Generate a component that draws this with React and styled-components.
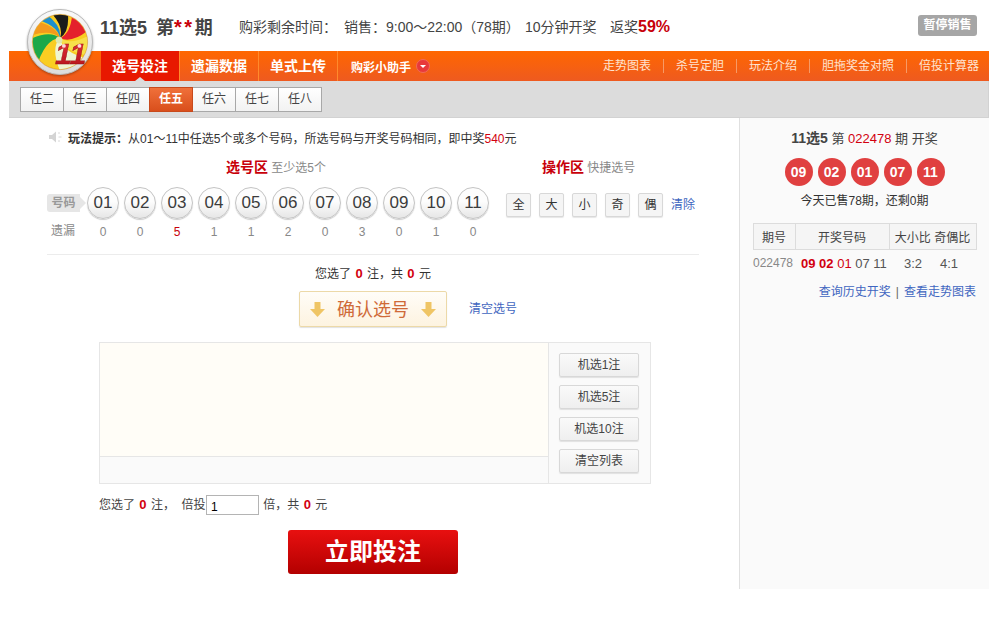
import styled, {createGlobalStyle} from 'styled-components'

const balls = ['01','02','03','04','05','06','07','08','09','10','11']
const misses = [0,0,5,1,1,2,0,3,0,1,0]
const tabs = ['任二','任三','任四','任五','任六','任七','任八']
const quick = ['全','大','小','奇','偶']
const links = ['走势图表','杀号定胆','玩法介绍','胆拖奖金对照','倍投计算器']
const randoms = ['机选1注','机选5注','机选10注','清空列表']
const drawn = ['09','02','01','07','11']

// full width punctuation
const COLON = '\uFF1A'
const COMMA = '\uFF0C'
const saleText = `销售${COLON}9:00\uFF5E22:00\uFF0878期\uFF09`
const tipText = `从01\uFF5E11中任选5个或多个号码${COMMA}所选号码与开奖号码相同${COMMA}即中奖`

const swirl = [
  ['#1b1b1b', -118, -82], ['#e4202c', -72, -22], ['#f7e04a', -12, 28],
  ['#eef6d2', 34, 86], ['#1ca84a', 128, 172], ['#f39a1c', 178, 208], ['#1c8fce', 212, 232],
]

const wedge = (from, to) => {
  const pt = (a, r) => {
    const t = a * Math.PI / 180
    return `${(34 + Math.cos(t) * r).toFixed(1)} ${(30 + Math.sin(t) * r).toFixed(1)}`
  }
  return `M34 30Q${pt(from + 48, 16)} ${pt(from, 40)}L${pt(to, 40)}Q${pt(to + 48, 16)} 34 30Z`
}

const Logo = () => (
  <LogoMark viewBox="0 0 68 68" width="66" height="66">
    <defs>
      <clipPath id="logo-clip"><circle cx="34" cy="34" r="28" /></clipPath>
      <linearGradient id="logo-ring" x1="0" y1="0" x2="0" y2="1">
        <stop offset="0" stopColor="#fafafa" />
        <stop offset="1" stopColor="#dcdcdc" />
      </linearGradient>
      <linearGradient id="logo-eleven" x1="0" y1="0" x2="0" y2="1">
        <stop offset="0" stopColor="#e8333a" />
        <stop offset="1" stopColor="#b01218" />
      </linearGradient>
    </defs>
    <circle cx="34" cy="34" r="33.500" fill="url(#logo-ring)" stroke="#b8b8b8" strokeWidth="1" />
    <circle cx="34" cy="34" r="28.500" fill="#f6a81c" stroke="#c8a050" strokeWidth=".5" />
    <g clipPath="url(#logo-clip)">
      <circle cx="34" cy="34" r="28" fill="#f9cd22" />
      {swirl.map(([color, from, to]) => <path key={color} d={wedge(from, to)} fill={color} />)}
    </g>
    <circle cx="33" cy="32" r="3.500" fill="#dfe8b0" />
    <text x="45" y="57" textAnchor="middle" fontFamily="Liberation Sans" fontWeight="700" fontStyle="italic" fontSize="31" fill="url(#logo-eleven)" stroke="#8f0d10" strokeWidth=".4">11</text>
    <circle cx="38" cy="38" r="2" fill="#ffd8d8" />
    <circle cx="54" cy="38" r="2" fill="#ffd8d8" />
  </LogoMark>
)

const Speaker = () => (
  <svg width="14" height="12" viewBox="0 0 14 12">
    <path d="M0 4h3l4-3.500v11L3 8H0z" fill="#d4d4d4" />
    <path d="M9 2h2M9.500 6h3M9 10h2" stroke="#d8d8d8" strokeWidth="1" />
  </svg>
)

const DownArrow = () => (
  <svg width="15" height="15" viewBox="0 0 15 15">
    <path d="M4.500 0h6v7H15l-7.500 8L0 7h4.500z" fill="#efc565" />
  </svg>
)

export default function App() {
  return (
    <Page>
      <GlobalStyle />
      <Logo />
      <Header>
        <Title>11选5 第<Stars>**</Stars>期</Title>
        <Countdown>购彩剩余时间{COLON}</Countdown>
        <Sale>{saleText}</Sale>
        <Interval>10分钟开奖</Interval>
        <Rebate>返奖<strong>59%</strong></Rebate>
        <Stopped>暂停销售</Stopped>
      </Header>

      <Nav>
        <NavTab $active>选号投注</NavTab>
        <NavTab>遗漏数据</NavTab>
        <NavTab>单式上传</NavTab>
        <Helper>购彩小助手<HelperDot /></Helper>
        <NavLinks>
          {links.map(l => <NavLink key={l}>{l}</NavLink>)}
        </NavLinks>
      </Nav>

      <TabBar>
        <Tabs>
          {tabs.map(t => <Tab key={t} $active={t === '任五'}>{t}</Tab>)}
        </Tabs>
      </TabBar>

      <Content>
        <Main>
          <Tip>
            <Speaker />
            <TipText><b>玩法提示{COLON}</b>{tipText}<RedPlain>540</RedPlain>元</TipText>
          </Tip>

          <Heads>
            <Head $width="316px"><strong>选号区</strong> 至少选5个</Head>
            <Head><strong>操作区</strong> 快捷选号</Head>
          </Heads>

          <PickRow>
            <RowLabel>号码</RowLabel>
            <Balls>
              {balls.map(b => <Ball key={b}>{b}</Ball>)}
            </Balls>
            <Quick>
              {quick.map(q => <QuickBtn key={q}>{q}</QuickBtn>)}
            </Quick>
            <ClearLink>清除</ClearLink>
          </PickRow>

          <MissRow>
            <MissLabel>遗漏</MissLabel>
            <Balls>
              {misses.map((m, i) => <Miss key={i} $hot={m === 5}>{m}</Miss>)}
            </Balls>
          </MissRow>

          <Divider />

          <Picked>您选了 <Count>0</Count> 注{COMMA}共 <Count>0</Count> 元</Picked>

          <ConfirmRow>
            <Confirm><DownArrow /><ConfirmText>确认选号</ConfirmText><DownArrow /></Confirm>
            <ConfirmLink>清空选号</ConfirmLink>
          </ConfirmRow>

          <ListBox>
            <ListLeft>
              <ListArea />
              <ListFoot />
            </ListLeft>
            <ListSide>
              {randoms.map(r => <SideBtn key={r}>{r}</SideBtn>)}
            </ListSide>
          </ListBox>

          <Summary>
            您选了 <Count>0</Count> 注{COMMA}&nbsp;&nbsp;倍投 <Times defaultValue="1" /> 倍{COMMA}共 <Count>0</Count> 元
          </Summary>

          <Submit>立即投注</Submit>
        </Main>

        <Side>
          <DrawTitle><b>11选5</b> 第 <RedPlain>022478</RedPlain> 期 开奖</DrawTitle>
          <DrawBalls>
            {drawn.map(d => <DrawBall key={d}>{d}</DrawBall>)}
          </DrawBalls>
          <Sold>今天已售78期{COMMA}还剩0期</Sold>
          <History>
            <thead>
              <tr>
                <Th $width="42px">期号</Th>
                <Th $width="94px">开奖号码</Th>
                <Th $width="87px">大小比 奇偶比</Th>
              </tr>
            </thead>
            <tbody>
              <tr>
                <IssueCell>022478</IssueCell>
                <NumberCell><b>09 02</b> <RedPlain>01</RedPlain> 07 11</NumberCell>
                <RatioCell><span>3:2</span><span>4:1</span></RatioCell>
              </tr>
            </tbody>
          </History>
          <SideLinks><Link>查询历史开奖</Link><Sep>|</Sep><Link>查看走势图表</Link></SideLinks>
        </Side>
      </Content>
    </Page>
  )
}

const GlobalStyle = createGlobalStyle`
  html, body {
    margin: 0;
    padding: 0;
    background: #fff;
  }
  body {
    color: #333;
    font-size: 12px;
    font-family: "Liberation Sans", "Noto Sans CJK SC", sans-serif;
  }
`

const Page = styled.div`
  width: 980px;
  height: 640px;
  margin-left: 9px;
  position: relative;
`

const LogoMark = styled.svg`
  top: 9px;
  left: 18px;
  z-index: 5;
  position: absolute;
  filter: drop-shadow(0 1px 1px rgba(0, 0, 0, 0.3));
`

const Header = styled.div`
  height: 51px;
  display: flex;
  align-items: center;
  padding-left: 91px;
  color: #444;
  font-size: 14px;
`

const Title = styled.div`
  width: 139px;
  color: #444;
  font-size: 18px;
  font-weight: bold;
  word-spacing: 4px;
  white-space: pre;
`

const Stars = styled.span`
  color: #c8000a;
  font-size: 20px;
  letter-spacing: 2.500px;
`

const RedPlain = styled.span`
  color: #d2000f;
`

const Countdown = styled.div`
  width: 105px;
  white-space: nowrap;
`

const Sale = styled.div`
  width: 181px;
  white-space: nowrap;
`

const Interval = styled.div`
  width: 85px;
  white-space: nowrap;
`

const Rebate = styled.div`
  strong {
    color: #c8000a;
    font-size: 16px;
  }
`

const Stopped = styled.div`
  width: 59px;
  height: 21px;
  color: #fff;
  font-size: 12px;
  font-weight: bold;
  line-height: 21px;
  text-align: center;
  border-radius: 3px;
  margin-left: auto;
  margin-right: 12px;
  background: #a6a6a6;
`

const Nav = styled.div`
  height: 30px;
  display: flex;
  align-items: stretch;
  padding-left: 92px;
  background: linear-gradient(#ff6700, #ee5a20);
`

const NavTab = styled.div`
  width: 78px;
  color: #fff;
  font-size: 14px;
  font-weight: bold;
  line-height: 30px;
  text-align: center;
  position: relative;
  border-right: 1px solid #ff8a2c;
  background: ${p => p.$active ? '#e81800' : 'transparent'};

  ${p => p.$active && `
    &:after {
      content: '';
      left: 34px;
      bottom: 0;
      position: absolute;
      border-left: 5px solid transparent;
      border-right: 5px solid transparent;
      border-bottom: 4px solid #dcdcdc;
    }
  `}
`

const Helper = styled.div`
  display: flex;
  align-items: center;
  gap: 5px;
  color: #fff;
  font-weight: bold;
  padding-left: 13px;
`

const HelperDot = styled.i`
  width: 14px;
  height: 14px;
  position: relative;
  border-radius: 50%;
  box-sizing: border-box;
  background: #e8393a;
  border: 1px solid #f26a5a;

  &:after {
    content: '';
    top: 5px;
    left: 3px;
    position: absolute;
    border-left: 3px solid transparent;
    border-right: 3px solid transparent;
    border-top: 3px solid #fff;
  }
`

const NavLinks = styled.div`
  display: flex;
  align-items: center;
  margin-left: auto;
  padding-right: 10px;
`

const NavLink = styled.span`
  color: #ffe3d0;
  line-height: 14px;

  & + & {
    margin-left: 12px;
    padding-left: 12px;
    border-left: 1px solid #f79a66;
  }
`

const TabBar = styled.div`
  height: 37px;
  display: flex;
  align-items: flex-start;
  padding: 6px 0 0 11px;
  box-sizing: border-box;
  background: #dcdcdc;
  border-bottom: 1px solid #d2d2d2;
  border-right: 1px solid #d2d2d2;
`

const Tabs = styled.div`
  display: flex;
`

const Tab = styled.div`
  width: 44px;
  height: 25px;
  margin-right: -1px;
  font-size: 12px;
  line-height: 23px;
  text-align: center;
  box-sizing: border-box;
  position: relative;
  color: ${p => p.$active ? '#fff' : '#444'};
  font-weight: ${p => p.$active ? 'bold' : 'normal'};
  border: 1px solid ${p => p.$active ? '#c84a1c' : '#a8a8a8'};
  background: ${p => p.$active ? 'linear-gradient(#f0703a, #d94f1c)' : 'linear-gradient(#fff, #f2f2f2)'};
  z-index: ${p => p.$active ? 1 : 0};
`

const Content = styled.div`
  display: flex;
  height: 471px;
`

const Main = styled.div`
  width: 731px;
  flex: none;
  box-sizing: border-box;
  border-right: 1px solid #e0e0e0;
  padding-left: 38px;
`

const Tip = styled.div`
  height: 39px;
  display: flex;
  align-items: center;
  gap: 5px;
  padding: 0 0 1px 2px;
  box-sizing: border-box;
`

const TipText = styled.div`
  color: #333;
  b {
    font-weight: bold;
  }
`

const Heads = styled.div`
  height: 18px;
  display: flex;
  margin-top: 1px;
  padding-left: 179px;
`

const Head = styled.div`
  width: ${p => p.$width || 'auto'};
  flex: none;
  color: #888;
  line-height: 18px;

  strong {
    color: #c8000a;
    font-size: 14px;
    font-weight: bold;
  }
`

const PickRow = styled.div`
  height: 32px;
  display: flex;
  align-items: center;
  margin-top: 11px;
`

const RowLabel = styled.div`
  width: 33px;
  height: 18px;
  flex: none;
  color: #999;
  margin-right: 7px;
  font-weight: bold;
  line-height: 18px;
  text-align: center;
  position: relative;
  border-radius: 3px 0 0 3px;
  background: #e6e6e6;

  &:after {
    content: '';
    top: 3px;
    right: -6px;
    position: absolute;
    border-top: 6px solid transparent;
    border-bottom: 6px solid transparent;
    border-left: 6px solid #e6e6e6;
  }
`

const Balls = styled.div`
  display: flex;
  gap: 5px;
`

const Ball = styled.div`
  width: 32px;
  height: 32px;
  color: #3c3c3c;
  font-size: 17px;
  line-height: 29px;
  text-align: center;
  border-radius: 50%;
  box-sizing: border-box;
  border: 1px solid #c4c4c4;
  background: linear-gradient(#fdfdfd 45%, #e6e6e6);
  box-shadow: 0 1px 1px rgba(0, 0, 0, 0.2);
`

const Quick = styled.div`
  display: flex;
  gap: 8px;
  margin: 3px 0 0 17px;
`

const QuickBtn = styled.div`
  width: 25px;
  height: 24px;
  color: #333;
  font-size: 12px;
  line-height: 22px;
  text-align: center;
  box-sizing: border-box;
  background: #f5f5f5;
  border: 1px solid #d8d8d8;
  border-radius: 2px;
  box-shadow: 0 1px 1px rgba(0, 0, 0, 0.1);
`

const Link = styled.span`
  color: #3f66c0;
  font-size: 12px;
`

const ClearLink = styled(Link)`
  margin-left: 8px;
`

const ConfirmLink = styled(Link)`
  margin-bottom: 3px;
`

const Sep = styled.span`
  color: #666;
  margin: 0 5px;
`

const MissRow = styled.div`
  height: 18px;
  display: flex;
  align-items: center;
  margin-top: 4px;
`

const MissLabel = styled.div`
  width: 40px;
  flex: none;
  color: #888;
  margin-top: -5px;
  padding-left: 4px;
  box-sizing: border-box;
`

const Miss = styled.div`
  width: 32px;
  font-size: 12px;
  text-align: center;
  color: ${p => p.$hot ? '#c8000a' : '#888'};
`

const Divider = styled.div`
  width: 652px;
  height: 1px;
  margin-top: 13px;
  background: #ececec;
`

const Picked = styled.div`
  width: 652px;
  height: 18px;
  margin-top: 10px;
  line-height: 18px;
  text-align: center;
  color: #333;
`

const Count = styled.b`
  color: #d2000f;
  font-size: 13px;
  margin: 0 1px;
`

const ConfirmRow = styled.div`
  display: flex;
  align-items: center;
  gap: 22px;
  margin-top: 8px;
  padding-left: 252px;
`

const Confirm = styled.div`
  width: 148px;
  height: 36px;
  display: flex;
  align-items: center;
  justify-content: center;
  gap: 12px;
  color: #cf6a38;
  font-size: 18px;
  box-sizing: border-box;
  border-radius: 2px;
  border: 1px solid #ecd9a8;
  background: linear-gradient(#fffdf8, #fdf3e0);
  box-shadow: 0 1px 1px rgba(0, 0, 0, 0.12);
`

const ConfirmText = styled.span`
  margin-bottom: 3px;
`

const ListBox = styled.div`
  width: 552px;
  height: 142px;
  display: flex;
  margin: 15px 0 0 52px;
  box-sizing: border-box;
  border: 1px solid #e6e6e6;
  background: #fafafa;
`

const ListLeft = styled.div`
  width: 448px;
  flex: none;
  display: flex;
  flex-direction: column;
  border-right: 1px solid #e6e6e6;
`

const ListArea = styled.div`
  height: 113px;
  background: #fffdf7;
  border-bottom: 1px solid #e6e6e6;
`

const ListFoot = styled.div`
  flex: 1;
`

const ListSide = styled.div`
  flex: 1;
  display: flex;
  flex-direction: column;
  gap: 8px;
  padding: 10px 0 0 10px;
`

const SideBtn = styled.div`
  width: 80px;
  height: 24px;
  color: #444;
  font-size: 12px;
  line-height: 22px;
  text-align: center;
  box-sizing: border-box;
  border-radius: 2px;
  border: 1px solid #d8d8d8;
  background: linear-gradient(#fafafa, #efefef);
  box-shadow: 0 1px 1px rgba(0, 0, 0, 0.1);
`

const Summary = styled.div`
  height: 20px;
  margin: 11px 0 0 52px;
  color: #444;
  line-height: 20px;
  white-space: nowrap;
`

const Times = styled.input`
  width: 53px;
  height: 20px;
  padding: 3px 4px 0;
  color: #000;
  font-size: 12px;
  font-family: inherit;
  vertical-align: top;
  box-sizing: border-box;
  border: 1px solid #b4b4b4;
  outline: none;
  margin: 0 1px 0 -3px;
`

const Submit = styled.div`
  width: 170px;
  height: 44px;
  color: #fff;
  font-size: 24px;
  font-weight: bold;
  line-height: 43px;
  text-align: center;
  margin: 15px 0 0 241px;
  border-radius: 3px;
  background: linear-gradient(#e81010, #b30000);
`

const Side = styled.div`
  width: 249px;
  display: flex;
  flex-direction: column;
  align-items: center;
  background: #fafafa;
  box-sizing: border-box;
  padding-top: 12px;
`

const DrawTitle = styled.div`
  color: #444;
  font-size: 13px;
  line-height: 16px;

  b {
    font-size: 14px;
    font-weight: bold;
  }
`

const DrawBalls = styled.div`
  display: flex;
  gap: 5px;
  margin-top: 11px;
`

const DrawBall = styled.div`
  width: 28px;
  height: 28px;
  color: #fff;
  font-size: 14px;
  font-weight: bold;
  line-height: 28px;
  text-align: center;
  border-radius: 50%;
  background: #e04040;
`

const Sold = styled.div`
  color: #333;
  margin-top: 7px;
  line-height: 16px;
`

const History = styled.table`
  width: 223px;
  margin-top: 14px;
  table-layout: fixed;
  border-collapse: collapse;
`

const Th = styled.th`
  width: ${p => p.$width};
  height: 26px;
  padding: 0;
  color: #444;
  font-size: 12px;
  font-weight: normal;
  white-space: nowrap;
  box-sizing: border-box;
  background: #f5f5f5;
  border: 1px solid #dcdcdc;
`

const IssueCell = styled.td`
  height: 26px;
  padding: 0;
  color: #888;
  font-size: 12px;
`

const NumberCell = styled.td`
  padding: 0 0 0 6px;
  color: #555;
  font-size: 13px;
  white-space: nowrap;

  b {
    color: #d2000f;
  }
`

const RatioCell = styled.td`
  padding: 0 0 0 6px;
  color: #555;
  font-size: 13px;
  white-space: nowrap;

  span {
    width: 36px;
    display: inline-block;
    text-align: center;
  }
`

const SideLinks = styled.div`
  width: 223px;
  margin-top: 6px;
  text-align: right;
`
